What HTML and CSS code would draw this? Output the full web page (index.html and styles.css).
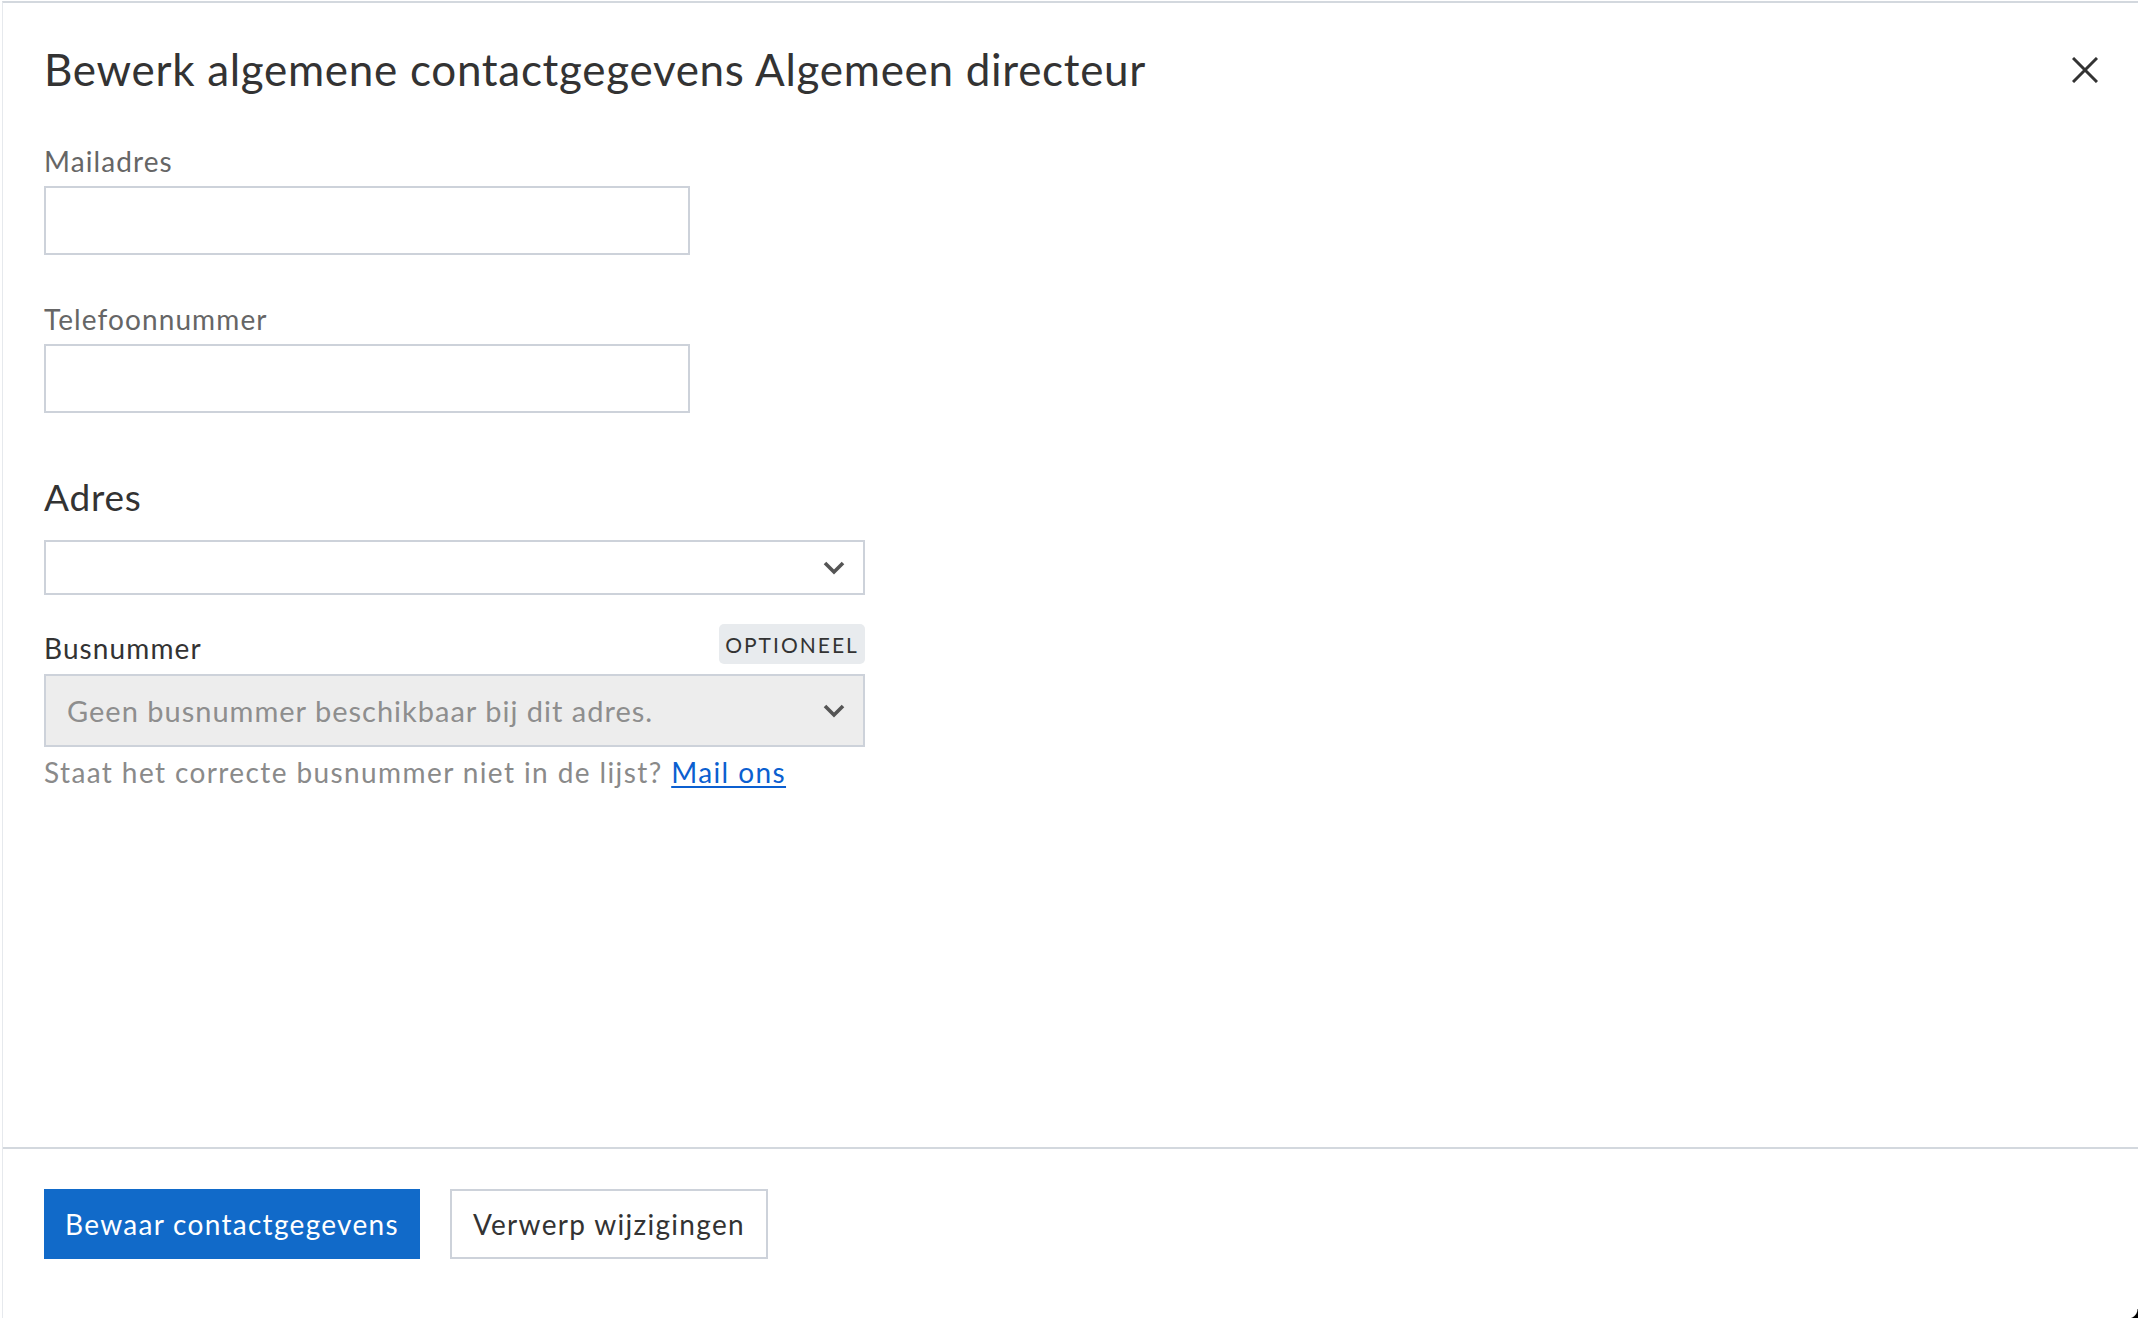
FILE: index.html
```html
<!DOCTYPE html>
<html lang="nl">
<head>
<meta charset="utf-8">
<title>Bewerk algemene contactgegevens</title>
<link rel="stylesheet" href="styles.css">
</head>
<body>
<div class="window">
  <header class="modal-header">
    <h1 class="modal-title">Bewerk algemene contactgegevens Algemeen directeur</h1>
    <button class="close-btn" aria-label="Sluiten">
      <svg width="26" height="26" viewBox="0 0 26 26"><path d="M1 1 L25 25 M25 1 L1 25" stroke="#333" stroke-width="3" fill="none"/></svg>
    </button>
  </header>

  <main class="modal-body">
    <div class="field">
      <label class="label label-muted">Mailadres</label>
      <div class="input"></div>
    </div>
    <div class="field field-gap">
      <label class="label label-muted">Telefoonnummer</label>
      <div class="input"></div>
    </div>

    <h2 class="section-title">Adres</h2>
    <div class="select">
      <span class="select-text"></span>
      <svg class="chevron" width="22" height="14" viewBox="0 0 22 14"><path d="M2 2 L11 11 L20 2" stroke="#555" stroke-width="3.6" fill="none"/></svg>
    </div>

    <div class="label-row">
      <label class="label label-dark">Busnummer</label>
      <span class="badge">OPTIONEEL</span>
    </div>
    <div class="select select-disabled">
      <span class="select-text placeholder">Geen busnummer beschikbaar bij dit adres.</span>
      <svg class="chevron" width="22" height="14" viewBox="0 0 22 14"><path d="M2 2 L11 11 L20 2" stroke="#555" stroke-width="3.6" fill="none"/></svg>
    </div>
    <p class="help">Staat het correcte busnummer niet in de lijst? <a href="#">Mail ons</a></p>
  </main>

  <footer class="modal-footer">
    <button class="btn btn-primary">Bewaar contactgegevens</button>
    <button class="btn btn-secondary">Verwerp wijzigingen</button>
  </footer>
  <div class="corner"></div>
</div>
</body>
</html>
```

FILE: styles.css
```css
html, body {
  margin: 0;
  padding: 0;
  background: #ffffff;
}

body {
  font-family: Lato, "Liberation Sans", sans-serif;
  color: #333333;
}

.window {
  position: relative;
  box-sizing: border-box;
  height: 1318px;
  margin-top: 1px;
  margin-left: 2px;
  border-top: 2px solid #d3d8de;
  border-left: 1px solid #e6e9ed;
  display: flex;
  flex-direction: column;
}

.modal-header {
  display: flex;
  align-items: center;
  justify-content: space-between;
  padding: 40px 40px 0 41px;
}

.modal-title {
  margin: 0;
  font-size: 44px;
  line-height: 53px;
  font-weight: 400;
  letter-spacing: 0.7px;
  color: #333333;
}

.close-btn {
  border: 0;
  background: transparent;
  padding: 0;
  width: 26px;
  height: 26px;
  display: flex;
  cursor: pointer;
}

.modal-body {
  flex: 1;
  padding: 47px 41px 0 41px;
}

.field {
  display: flex;
  flex-direction: column;
  width: 646px;
}

.field-gap {
  margin-top: 46px;
}

.label {
  display: block;
  font-size: 28px;
  line-height: 36px;
  letter-spacing: 1.1px;
  margin-bottom: 7px;
}

.label-muted {
  color: #666666;
}

.label-dark {
  color: #333333;
}

.input {
  box-sizing: border-box;
  height: 69px;
  border: 2px solid #cdd2da;
  background: #ffffff;
}

.section-title {
  margin: 62px 0 0 0;
  font-size: 37px;
  line-height: 44px;
  font-weight: 400;
  letter-spacing: 0.8px;
  color: #333333;
}

.select {
  box-sizing: border-box;
  width: 821px;
  height: 55px;
  margin-top: 21px;
  border: 2px solid #cdd2da;
  background: #ffffff;
  display: flex;
  align-items: center;
  justify-content: space-between;
  padding: 0 18px 0 21px;
}

.select-disabled {
  height: 73px;
  margin-top: 10px;
  background: #ededed;
}

.select-text {
  font-size: 29px;
  letter-spacing: 1px;
}

.placeholder {
  color: #8e8e8e;
}

.chevron {
  flex: none;
}

.label-row {
  width: 821px;
  margin-top: 29px;
  display: flex;
  align-items: flex-end;
  justify-content: space-between;
  height: 40px;
}

.label-row .label {
  margin: 0;
  line-height: 32px;
}

.badge {
  box-sizing: border-box;
  height: 40px;
  width: 146px;
  display: flex;
  align-items: center;
  justify-content: center;
  background: #e8ebee;
  border-radius: 5px;
  font-size: 21px;
  letter-spacing: 2px;
  color: #333333;
}

.help {
  margin: 7px 0 0 0;
  font-size: 28px;
  line-height: 36px;
  letter-spacing: 1.4px;
  color: #8a8a8a;
}

.help a {
  color: #0b5fd0;
  text-decoration: underline;
  text-underline-offset: 3px;
}

.modal-footer {
  border-top: 2px solid #d3d8de;
  padding: 40px 41px 60px 41px;
  display: flex;
  gap: 30px;
}

.btn {
  box-sizing: border-box;
  height: 70px;
  font-family: Lato, "Liberation Sans", sans-serif;
  font-size: 28px;
  letter-spacing: 1.3px;
  padding: 0 21px;
  border-radius: 0;
  cursor: pointer;
}

.btn-primary {
  background: #116ac9;
  color: #ffffff;
  border: 0;
}

.btn-secondary {
  background: #ffffff;
  color: #333333;
  border: 2px solid #cdd2da;
}

.corner {
  position: absolute;
  right: 0;
  bottom: 0;
  width: 10px;
  height: 10px;
  background: radial-gradient(circle at 0 0, transparent 9px, #000000 10px);
}
```
